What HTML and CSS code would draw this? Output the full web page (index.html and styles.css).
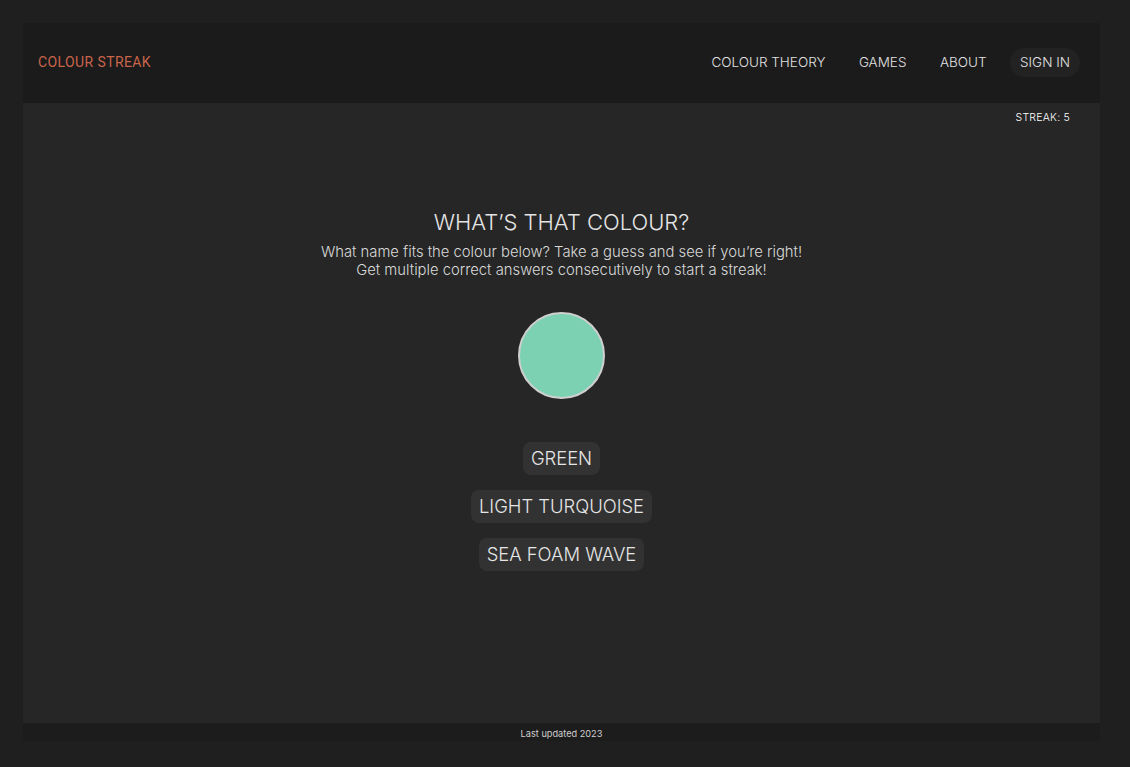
FILE: index.html
```html
<!DOCTYPE html>
<html>
<head>
<meta charset="utf-8">
<link rel="stylesheet" href="styles.css">
</head>
<body>
<div class="app">
  <header class="header">
    <div class="logo">COLOUR STREAK</div>
    <nav class="nav">
      <a class="nav-link">COLOUR THEORY</a>
      <a class="nav-link">GAMES</a>
      <a class="nav-link">ABOUT</a>
      <a class="nav-link signin">SIGN IN</a>
    </nav>
  </header>
  <main class="main">
    <div class="streak">STREAK: 5</div>
    <section class="game">
      <h1 class="title">WHAT’S THAT COLOUR?</h1>
      <p class="desc">What name fits the colour below? Take a guess and see if you’re right!<br>Get multiple correct answers consecutively to start a streak!</p>
      <div class="swatch"></div>
      <div class="options">
        <button class="option">GREEN</button>
        <button class="option">LIGHT TURQUOISE</button>
        <button class="option">SEA FOAM WAVE</button>
      </div>
    </section>
  </main>
  <footer class="footer">Last updated 2023</footer>
</div>
</body>
</html>
```
FILE: styles.css
```css
* { box-sizing: border-box; }
html, body { margin: 0; padding: 0; }
body {
  background: #1f1f1f;
  font-family: Inter, "Noto Sans", sans-serif;
  color: #e0e0e0;
  width: 1130px;
  height: 767px;
  overflow: hidden;
}
.app {
  margin: 23px 30px 0 23px;
  width: 1077px;
  display: flex;
  flex-direction: column;
}
.header {
  height: 80px;
  background: #1b1b1b;
  display: flex;
  align-items: center;
  justify-content: space-between;
  padding: 0 20px 2px 15px;
}
.logo {
  font-family: Roboto, sans-serif;
  font-size: 14px;
  color: #c9644c;
  letter-spacing: 0.4px;
}
.nav {
  display: flex;
  align-items: center;
  gap: 13.5px;
}
.nav-link {
  font-size: 13.5px;
  font-weight: 300;
  color: #e2e2e2;
  padding: 7px 10px;
  border-radius: 15px;
  line-height: 15px;
}
.signin {
  background: #222222;
}
.main {
  height: 620px;
  background: #262626;
  display: flex;
  flex-direction: column;
}
.streak {
  align-self: flex-end;
  margin: 8px 30px 0 0;
  font-size: 10.6px;
  font-weight: 300;
  color: #ffffff;
  letter-spacing: 0.2px;
}
.game {
  display: flex;
  flex-direction: column;
  align-items: center;
  margin-top: 85px;
}
.title {
  margin: 0;
  font-size: 22px;
  font-weight: 300;
  color: #e4e4e4;
  line-height: 26px;
}
.desc {
  margin: 8px 0 0 0;
  font-size: 14.8px;
  line-height: 18px;
  text-align: center;
  color: #dadada;
  font-weight: 300;
}
.swatch {
  margin-top: 33px;
  width: 87px;
  height: 87px;
  border-radius: 50%;
  background: #7cd1b3;
  border: 2px solid #cfcfcf;
}
.options {
  margin-top: 43px;
  display: flex;
  flex-direction: column;
  align-items: center;
  gap: 15px;
}
.option {
  font-family: Inter, sans-serif;
  font-size: 18.4px;
  font-weight: 300;
  color: #e6e6e6;
  background: #323232;
  border: none;
  border-radius: 8px;
  padding: 0 8px;
  height: 33px;
  line-height: 33px;
}
.footer {
  height: 18px;
  background: #1c1c1c;
  font-size: 9.2px;
  text-align: center;
  line-height: 21px;
  color: #cfcfcf;
}
```
